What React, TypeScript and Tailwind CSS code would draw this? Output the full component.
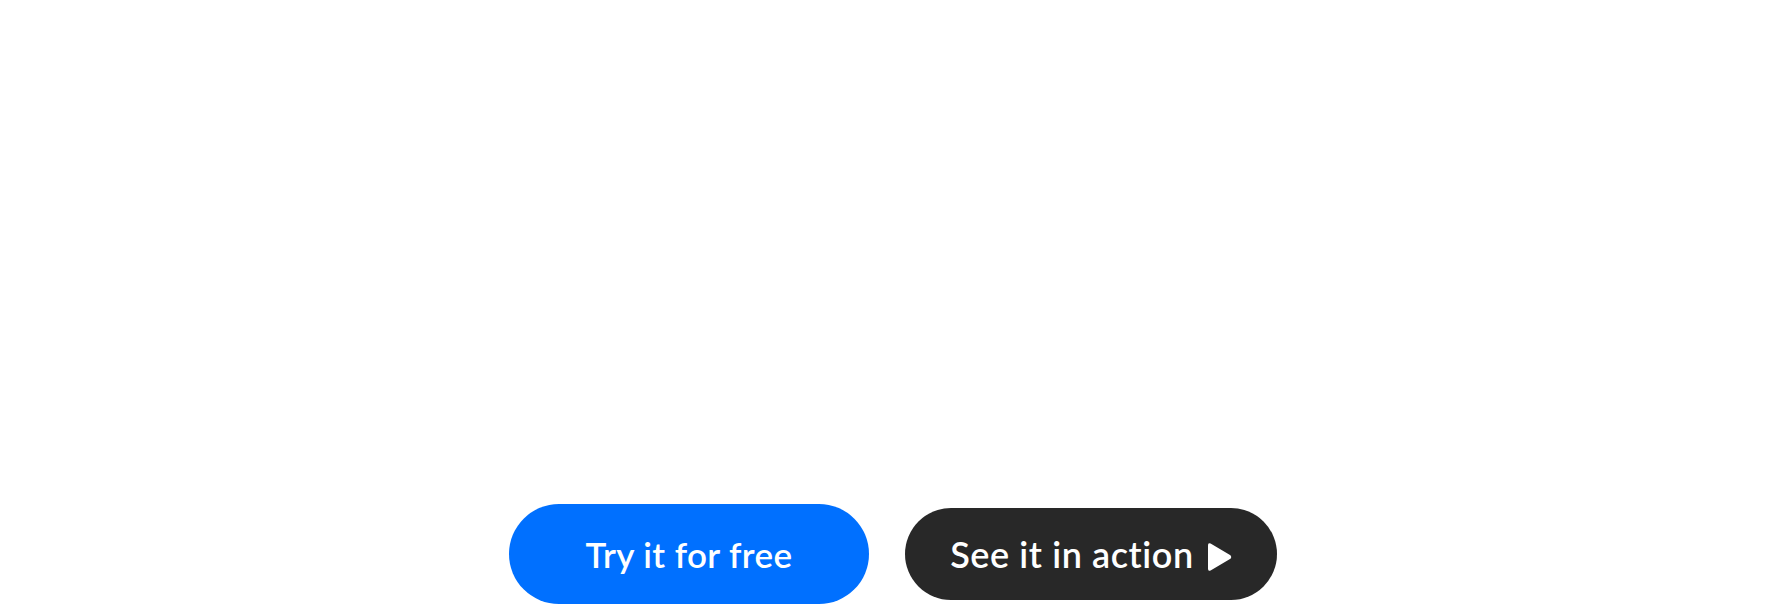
export default function App() {
  return (
    <main className="h-[604px] w-full bg-white flex flex-col justify-end">
      <div className="flex items-center justify-center gap-9 pr-[4px]">
        <a
          href="#"
          className="flex h-[100px] w-[360px] items-center justify-center rounded-full bg-[#0070ff] text-white text-[35px] font-semibold tracking-[0.4px]"
          style={{ fontFamily: 'Lato, "Noto Sans", sans-serif' }}
        >
          Try it for free
        </a>
        <a
          href="#"
          className="flex h-[92px] w-[372px] items-center justify-center gap-[13px] rounded-full bg-[#282828] text-white text-[36px] font-semibold tracking-[0.6px]"
          style={{ fontFamily: 'Lato, "Noto Sans", sans-serif' }}
        >
          See it in action
          <svg className="mt-[6px] h-[28px] w-[25px]" viewBox="0 0 25 28" fill="currentColor">
            <path d="M3.6 0.6 L23.4 12.2 Q25 14 23.4 15.8 L3.6 27.4 Q1 28.8 1 25.8 V2.2 Q1 -0.8 3.6 0.6 Z" />
          </svg>
        </a>
      </div>
    </main>
  )
}
